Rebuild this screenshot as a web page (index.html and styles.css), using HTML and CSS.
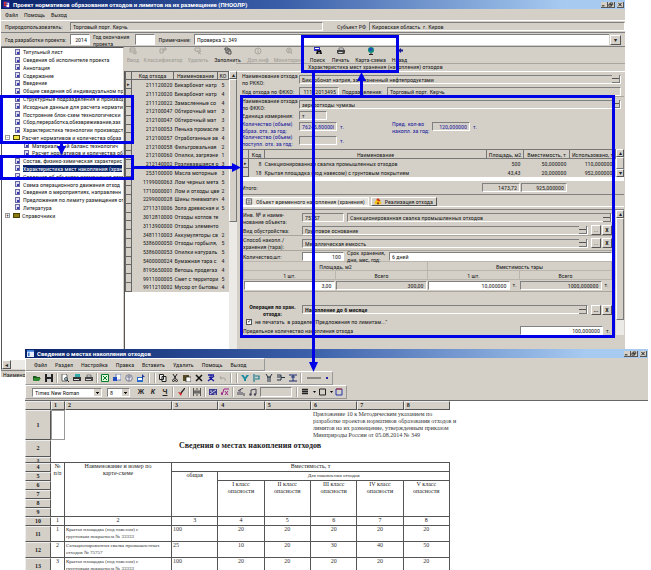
FILE: index.html
```html
<!DOCTYPE html>
<html lang="ru">
<head>
<meta charset="utf-8">
<title>Проект нормативов образования отходов</title>
<link rel="stylesheet" href="styles.css">
</head>
<body>
<main class="desktop">

<section class="window project">
  <header class="titlebar">
    <svg class="app-icon" viewBox="0 0 8 8"><rect width="8" height="8" fill="#2222a0"/><path d="M1 1h3v5H1z" fill="#d33"/><path d="M4 2h3v5H4z" fill="#fff"/><path d="M2 3h4v1H2z" fill="#16168c"/></svg>
    <h1>Проект нормативов образования отходов и лимитов на их размещение (ПНООЛР)</h1>
    <span class="win-buttons"><button aria-label="Свернуть"><svg viewBox="0 0 7 6"><path d="M1 4h3v1H1z"/></svg></button><button aria-label="Восстановить"><svg viewBox="0 0 7 6"><path d="M2.500 1h3v2.500h-3zM1 2.500h3V5H1z" fill="none" stroke="#000" stroke-width=".7"/></svg></button><button class="close" aria-label="Закрыть"><svg viewBox="0 0 7 6"><path d="M1.500 1l4 4m0-4l-4 4" stroke="#000"/></svg></button></span>
  </header>
  <nav class="menu"><a href="#">Файл</a><a href="#">Помощь</a><a href="#">Выход</a></nav>

  <div class="row user-row">
    <label for="user">Природопользователь:</label><input id="user" class="field user" value="Торговый порт. Керчь" readonly>
    <label for="subj">Субъект РФ</label><input id="subj" class="field grow" value="Кировская область  г. Киров" readonly>
  </div>
  <div class="row year-row">
    <label class="w65" for="y1">Год разработки проекта:</label><input id="y1" class="field white year num" value="2014">
    <label class="w39" for="y2">Год окончания<br>проекта</label><input id="y2" class="field white year">
    <label class="w35 right" for="note">Примечание:</label><input id="note" class="field white grow flat" value="Проверка 2, 349">
    <button class="btn drop" aria-label="Открыть список">▾</button>
  </div>

  <div class="workspace">
    <aside class="tree-pane">
      <ul class="tree">
        <li><i class="doc"></i>Титульный лист</li>
        <li><i class="doc"></i>Сведения об исполнителе проекта</li>
        <li><i class="doc"></i>Аннотация</li>
        <li><i class="doc"></i>Содержание</li>
        <li><i class="doc"></i>Введение</li>
        <li><i class="doc"></i>Общие сведения об индивидуальном пр</li>
        <li><i class="doc"></i>Структурные подразделения и производ</li>
        <li><i class="doc"></i>Исходные данные для расчета норматив</li>
        <li><i class="doc"></i>Построение блок-схем технологически</li>
        <li><i class="doc"></i>Сбор,переработка,обезвреживание,зах</li>
        <li><i class="doc"></i>Характеристика технологии производст</li>
        <li class="branch"><b>−</b><i class="folder open"></i>Расчет нормативов и количества образ</li>
        <li class="sub"><i class="doc"></i>Материальный баланс технологич</li>
        <li class="sub"><i class="doc"></i>Расчет нормативов и количества об</li>
        <li><i class="doc"></i>Состав, физико-химическая характерис</li>
        <li><i class="doc"></i><span class="selected">Характеристика мест накопления (хран</span></li>
        <li><i class="doc"></i>Сведения об объектах размещения отхо</li>
        <li><i class="doc"></i>Схема операционного движения отход</li>
        <li><i class="doc"></i>Сведения о мероприятиях, направленн</li>
        <li><i class="doc"></i>Предложения по лимиту размещения от</li>
        <li><i class="doc"></i>Литература</li>
        <li class="branch"><b>+</b><i class="folder"></i>Справочники</li>
      </ul>
      <div class="hscroll"><button class="btn" aria-label="Влево">◂</button></div>
    </aside>

    <div class="main-pane">
      <div class="toolbar">
        <button disabled><svg viewBox="0 0 8 8"><path d="M1 1h5v4H1zM1 3h5M4 6l3 1V4" class="ln"/></svg>Ввод</button>
        <button disabled><svg viewBox="0 0 8 8"><path d="M1 2h3v4H1zM5 1h2v2H5zM5 3l-1 2" class="ln"/></svg>Классификатор</button>
        <button disabled><svg viewBox="0 0 8 8"><path d="M1 1h5v3H1zM3 4l4 3M7 4L4 7" class="ln"/></svg>Удалить</button>
        <button><svg viewBox="0 0 8 8"><path d="M1 1h3v2H1zM4 4h3v3H4zM2 3v3h2M4 2h2v2" class="ln"/></svg>Заполнить</button>
        <button disabled><svg viewBox="0 0 8 8"><circle cx="4" cy="4" r="3" class="ln"/><path d="M4 2v1M4 3.500V6" class="ln"/></svg>Доп.инф</button>
        <button disabled><svg viewBox="0 0 8 8"><circle cx="4" cy="3.500" r="2.500" class="ln"/><circle cx="4" cy="3.500" r="1" class="ln"/><path d="M6 5l1 2" class="ln"/></svg>Мониторинг</button>
        <button><svg viewBox="0 0 8 8"><path d="M0 0h6v4H0z" fill="#2a2ac0"/><path d="M1 1h4v1H1z" fill="#fff"/><path d="M2 7l1-4h1.500v1h1V3H7l1 4H5.500V5h-1v2z" fill="#111"/></svg>Поиск</button>
        <button><svg viewBox="0 0 8 8"><path d="M2 1h4l1 2H2z" fill="#eee" stroke="#333" stroke-width=".6"/><path d="M0 3h8v3l-1 1H1L0 6z" fill="#444"/><path d="M1.500 5h4v1h-4z" fill="#ddd"/></svg>Печать</button>
        <button><svg viewBox="0 0 8 8"><circle cx="4" cy="3" r="3" fill="#128a7a"/><path d="M2 1l2 0 1 2-2 1zM5 1l1 1-1 1z" fill="#1b3bd0"/><path d="M4 6v1M2 7.500h4" stroke="#222"/></svg>Карта-схема</button>
        <button><svg viewBox="0 0 8 8"><path d="M2 3.500L5 1v1.500h2v2H5V6z" fill="#1a1a90"/></svg>Назад</button>
      </div>
      <h2 class="caption">Характеристика мест хранения (накопления) отходов</h2>

      <div class="split">
        <div class="waste-list">
          <table class="waste">
            <colgroup><col class="c-mark"><col class="c-code"><col><col class="c-ko"></colgroup>
            <thead><tr><th></th><th>Код отхода</th><th>Наименование</th><th>КО</th></tr></thead>
            <tbody>
            <tr><th>▸</th><td>211120020</td><td>Бикарбонат натр</td><td>5</td></tr>
            <tr><th></th><td>211120020</td><td>Бикарбонат натр</td><td>4</td></tr>
            <tr><th></th><td>211120022</td><td>Замасленные со</td><td>4</td></tr>
            <tr><th></th><td>212100047</td><td>Обтирочный мат</td><td>3</td></tr>
            <tr><th></th><td>212100047</td><td>Обтирочный мат</td><td>3</td></tr>
            <tr><th></th><td>212100053</td><td>Пенька промасле</td><td>3</td></tr>
            <tr><th></th><td>212100057</td><td>Отработанные ав</td><td>4</td></tr>
            <tr><th></th><td>212100058</td><td>Фильтровальная</td><td>2</td></tr>
            <tr><th></th><td>212100060</td><td>Опилки, загрязне</td><td>1</td></tr>
            <tr><th></th><td>212140002</td><td>Розливавшаяся р</td><td>3</td></tr>
            <tr><th></th><td>253100000</td><td>Масла моторные</td><td>3</td></tr>
            <tr><th></th><td>1199000063</td><td>Лом черных мета</td><td>5</td></tr>
            <tr><th></th><td>1710000001</td><td>Лом и отходы цве</td><td>2</td></tr>
            <tr><th></th><td>2299000028</td><td>Шины пневматич</td><td>4</td></tr>
            <tr><th></th><td>2711310006</td><td>Зола древесная и</td><td>5</td></tr>
            <tr><th></th><td>3012810000</td><td>Отходы котлов те</td><td></td></tr>
            <tr><th></th><td>3113900000</td><td>Отходы элементо</td><td></td></tr>
            <tr><th></th><td>3481110003</td><td>Аккумуляторы св</td><td>2</td></tr>
            <tr><th></th><td>5386000050</td><td>Отходы горбыля,</td><td>5</td></tr>
            <tr><th></th><td>5386000053</td><td>Опилки натураль</td><td>5</td></tr>
            <tr><th></th><td>5400000024</td><td>Бумажная тара с</td><td>4</td></tr>
            <tr><th></th><td>8195650000</td><td>Ветошь продегаз</td><td>4</td></tr>
            <tr><th></th><td>9911000005</td><td>Смет с территори</td><td>5</td></tr>
            <tr><th></th><td>9911210002</td><td>Мусор от бытовы</td><td>4</td></tr>
            </tbody>
          </table>
        </div>
        <div class="vscroll tall"><button class="btn" aria-label="Вверх">▴</button><span class="thumb"></span></div>

        <div class="details">
          <div class="row h14"><label class="w57" for="n1">Наименование отхода<br>по РККО:</label><input id="n1" class="field grow" value="Бикарбонат натрия, загрязненный нефтепродуктами" readonly><span class="spin"></span></div>
          <div class="row h10"><label class="w57" for="n2">Код отхода по ФККО:</label><input id="n2" class="field w40 num" value="11112013495" readonly><label class="w44 pad" for="n3">Подразделение:</label><input id="n3" class="field grow" value="Торговый порт. Керчь" readonly></div>
          <div class="row h15 lined"><label class="w57" for="n4">Наименование отхода<br>по ФККО:</label><input id="n4" class="field grow" value="зерноотходы чумизы" readonly><span class="spin"></span></div>
          <div class="row h9"><label class="w57" for="n5">Единица измерения:</label><input id="n5" class="field w28" value="т" readonly></div>
          <div class="row h13 blue"><label class="w57" for="n6">Количество (объем)<br>образ. отх. за год:</label><input id="n6" class="field w38 num" value="76245,800000" readonly><span class="unit">т.</span><label class="w40 gap" for="n7">Пред. кол-во<br>накопл. за год:</label><input id="n7" class="field w38 num" value="120,000000" readonly><span class="unit">т.</span></div>
          <div class="row h14 blue"><label class="w57" for="n8">Количество (объем)<br>поступл. отх. за год:</label><input id="n8" class="field w38 num" readonly><span class="unit">т.</span></div>

          <div class="places-wrap">
            <table class="places">
              <colgroup><col class="c-mark"><col class="c-num"><col><col class="c-area"><col class="c-cap"><col class="c-cap"></colgroup>
              <thead><tr><th></th><th>Код</th><th>Наименование</th><th>Площадь, м2</th><th>Вместимость, т</th><th>Использовано, т</th></tr></thead>
              <tbody>
              <tr><th>▸</th><td>8</td><td>Санкционированная свалка промышленных отходов</td><td>500</td><td>50,000000</td><td>110,000000</td></tr>
              <tr><th></th><td>18</td><td>Крытая площадка (под навесом) с грунтовым покрытием</td><td>43,43</td><td>20,000000</td><td>952,000000</td></tr>
              </tbody>
            </table>
            <div class="vscroll"><button class="btn" aria-label="Вверх">▴</button><span class="thumb"></span><button class="btn" aria-label="Вниз">▾</button></div>
          </div>
          <div class="row total"><span class="grow">Итого:</span><input class="field w38 num" aria-label="Итого площадь" value="1473,72" readonly><input class="field w46 num" aria-label="Итого вместимость" value="925,000000" readonly></div>

          <div class="tabs"><button class="tab active"><svg viewBox="0 0 8 8"><path d="M1 1h6v6H1z" fill="#eee" stroke="#555"/><path d="M2 3h4M2 5h4M4 2v4" stroke="#555" stroke-width=".6"/></svg>Объект временного накопления (хранения)</button><button class="tab"><svg viewBox="0 0 8 8"><path d="M0 5l3-4 5 4-1 2H1z" fill="#f4c20d"/><path d="M2 2l2-2 3 3-2 1z" fill="#d33a1c"/><path d="M3 5h2v2H3z" fill="#7a2a10"/></svg>Реализация отхода</button></div>

          <div class="object">
            <div class="object-form">
              <div class="row h15"><label class="w59" for="o1">Инв. № и наиме-<br>нование объекта:</label><input id="o1" class="field w42" value="75757" readonly><input class="field grow ml3" aria-label="Наименование объекта" value="Санкционированная свалка промышленных отходов" readonly><span class="spin"></span></div>
              <div class="row h10"><label class="w59" for="o2">Вид обустройства:</label><input id="o2" class="field grow" value="Грунтовое основание" readonly><span class="spin"></span><button class="btn more">...</button><button class="btn del">X</button></div>
              <div class="row h15 lined"><label class="w59" for="o3">Способ накопл./<br>хранения (тара):</label><input id="o3" class="field grow" value="Металлическая емкость" readonly><span class="spin"></span><button class="btn more">...</button><button class="btn del">X</button></div>
              <div class="row h11 lined"><label class="w59" for="o4">Количество,шт:</label><input id="o4" class="field white w42 num" value="100"><label class="w42 pad" for="o5">Срок хранения,<br>дни, мес, год:</label><input id="o5" class="field white grow" value="6 дней"></div>
              <table class="capacity">
                <thead>
                  <tr><th colspan="2">Площадь, м2</th><th colspan="2">Вместимость тары</th></tr>
                  <tr><th>1 шт.</th><th>Всего</th><th>1 шт.</th><th>Всего</th></tr>
                </thead>
                <tbody><tr>
                  <td><input class="field white num" aria-label="Площадь 1 шт." value="3,00"></td>
                  <td><input class="field num" aria-label="Площадь всего" value="300,00" readonly></td>
                  <td><div><input class="field white num" aria-label="Вместимость 1 шт." value="10,000000"><span class="unit">т.</span></div></td>
                  <td><div><input class="field num" aria-label="Вместимость всего" value="1000,000000" readonly><span class="unit">т.</span></div></td>
                </tr></tbody>
              </table>
              <div class="row h15 bold"><label class="w59 center" for="o6">Операция по хран.<br>отхода:</label><input id="o6" class="field grow" value="Накопление до 6 месяце" readonly><span class="spin"></span><button class="btn more">...</button><button class="btn del">X</button></div>
              <div class="row h9"><label class="check"><input type="checkbox" checked>не печатать  в разделе "Предложения по лимитам..."</label></div>
              <div class="row h9"><label class="grow" for="o7">Предельное количество накопления отхода</label><input id="o7" class="field white w83 num" value="100,000000"><span class="unit">т.</span></div>
            </div>
            <div class="vscroll"><button class="btn" aria-label="Вверх">▴</button><span class="thumb long"></span></div>
          </div>
        </div>
      </div>
    </div>
  </div>
  <footer class="status">Наименование</footer>
</section>

<section class="window report">
  <header class="titlebar">
    <svg class="app-icon" viewBox="0 0 8 8"><rect width="8" height="8" fill="#e8f0ff"/><path d="M0 0h8v2H0z" fill="#3a7bd8"/><path d="M1 3h2v4H1z" fill="#3a7bd8"/></svg>
    <h1>Сведения о местах накопления отходов</h1>
    <span class="win-buttons"><button aria-label="Свернуть"><svg viewBox="0 0 7 6"><path d="M1 4h3v1H1z"/></svg></button><button aria-label="Восстановить"><svg viewBox="0 0 7 6"><path d="M2.500 1h3v2.500h-3zM1 2.500h3V5H1z" fill="none" stroke="#000" stroke-width=".7"/></svg></button><button class="close" aria-label="Закрыть"><svg viewBox="0 0 7 6"><path d="M1.500 1l4 4m0-4l-4 4" stroke="#000"/></svg></button></span>
  </header>
  <nav class="menu band"><a href="#">Файл</a><a href="#">Раздел</a><a href="#">Настройка</a><a href="#">Правка</a><a href="#">Вставить</a><a href="#">Удалить</a><a href="#">Помощь</a><a href="#">Выход</a></nav>
  <div class="tools">
    <div class="band">
      <button aria-label="Открыть"><svg viewBox="0 0 8 8"><path d="M0 2h3l1 1h3v1H2L0 7z" fill="#1c5c1c"/><path d="M2 4h6L6 7H0z" fill="#2f8a2f"/></svg></button>
      <button aria-label="Сохранить"><svg viewBox="0 0 8 8"><path d="M0 0h8v8H0z" fill="#222"/><path d="M2 0h4v3H2zM2 5h4v3H2z" fill="#ccc"/></svg></button>
      <i class="sep"></i>
      <button aria-label="Просмотр"><svg viewBox="0 0 8 8"><path d="M1 0h4l1 1v6H1z" fill="#fff" stroke="#333" stroke-width=".7"/><circle cx="5" cy="5" r="1.500" fill="#acd" stroke="#222" stroke-width=".7"/><path d="M6 6l2 2" stroke="#222"/></svg></button>
      <button aria-label="Печать листов"><svg viewBox="0 0 8 8"><path d="M2 0h5v3H2z" fill="#3aa"/><path d="M0 3h8v4H0z" fill="#333"/><path d="M1 5h5v1H1z" fill="#ddd"/></svg></button>
      <button aria-label="Печать"><svg viewBox="0 0 8 8"><path d="M2 1h4v2H2z" fill="#eee" stroke="#333" stroke-width=".6"/><path d="M0 3h8v4H0z" fill="#444"/><path d="M1 5h5v1H1z" fill="#ddd"/></svg></button>
      <i class="sep"></i>
      <button aria-label="Таблица"><svg viewBox="0 0 8 8"><path d="M.5.5h7v7h-7z" fill="#dfd" stroke="#0a7a2a"/><path d="M2 2l4 4M6 2L2 6" stroke="#0a7a2a"/></svg></button>
      <button aria-label="Документ"><svg viewBox="0 0 8 8"><path d="M3 0h5v6H3z" fill="#fff" stroke="#35a" stroke-width=".7"/><path d="M0 3h4v4H0z" fill="#224cc0"/></svg></button>
      <button aria-label="Обзор"><svg viewBox="0 0 8 8"><circle cx="4" cy="4" r="3.300" fill="#e4e4e4" stroke="#668" stroke-width=".8"/><path d="M4 1v6M2 3h4" stroke="#668" stroke-width=".8"/></svg></button>
      <button aria-label="Отправить"><svg viewBox="0 0 8 8"><path d="M0 3h6v5H0z" fill="#2a6fd0"/><path d="M1 4h4v2H1z" fill="#fff"/><path d="M5 0l3 3H6v2H5z" fill="#18389a"/></svg></button>
      <i class="sep wide-gap"></i><i class="sep"></i>
      <button aria-label="Копировать"><svg viewBox="0 0 8 8"><path d="M.5.5h4v5h-4zM3 2.500h4v5H3z" fill="#eee" stroke="#222"/></svg></button>
      <button aria-label="Вырезать"><svg viewBox="0 0 8 8"><path d="M2 0l3 5M6 0L3 5" stroke="#222"/><circle cx="2.500" cy="6.500" r="1" fill="none" stroke="#222"/><circle cx="5.500" cy="6.500" r="1" fill="none" stroke="#222"/></svg></button>
      <button aria-label="Вставить"><svg viewBox="0 0 8 8"><path d="M0 1h6v6H0z" fill="#554a20"/><path d="M3 3h5v5H3z" fill="#fff" stroke="#222" stroke-width=".7"/></svg></button>
      <button aria-label="Удалить"><svg viewBox="0 0 8 8"><path d="M1 1l6 6M7 1L1 7" stroke="#111" stroke-width="1.500"/></svg></button>
      <button aria-label="Очистить формат"><svg viewBox="0 0 8 8"><path d="M1 1h6M4 1v3M1 7l6-5M2 3l5 4" stroke="#1a1aa0" stroke-width="1.300"/></svg></button>
      <button aria-label="Отменить" disabled><svg viewBox="0 0 8 8"><path d="M2 2L1 4l2 1M1 4h4q2 0 1 3" class="ln"/></svg></button>
      <i class="sep wide-gap"></i><i class="sep"></i>
      <button aria-label="Фильтр"><svg viewBox="0 0 8 8"><path d="M0 1h2.500L4 3.500 5.500 1H8L5 5v2H3V5z" fill="#1a8aa0"/></svg></button>
      <button aria-label="Вставить столбец"><svg viewBox="0 0 8 8"><path d="M1 0v8M2 2h4v3H2" fill="none" stroke="#1a7a90" stroke-width="1.200"/></svg></button>
      <button aria-label="Объединить"><svg viewBox="0 0 8 8"><path d="M1 0l2 3v5M7 0L5 3v5M2 3h4" fill="none" stroke="#234"/></svg></button>
      <button aria-label="Выровнять"><svg viewBox="0 0 8 8"><path d="M0 1h4v2H0M0 6h4V4M4 3.500h4" fill="none" stroke="#234"/></svg></button>
      <button aria-label="Распределить"><svg viewBox="0 0 8 8"><path d="M0 1h8M0 7h8M4 1v6M2 3h4" stroke="#1a2a70"/></svg></button>
      <i class="sep"></i>
      <button class="wide" aria-label="Линия"><svg viewBox="0 0 24 8"><path d="M2 4h14" stroke="#222" stroke-width=".8"/><path d="M21 3h2v2h-2z" fill="#22a"/></svg></button>
    </div>
    <div class="band">
      <select class="font-name" aria-label="Шрифт"><option>Times New Roman</option></select>
      <select class="font-size" aria-label="Размер"><option>8</option></select>
      <button class="ch" aria-label="Жирный"><b>Ж</b></button>
      <button class="ch" aria-label="Курсив"><b><em>К</em></b></button>
      <button class="ch" aria-label="Подчеркнутый"><b><u>Ч</u></b></button>
      <i class="sep"></i>
      <button aria-label="Кисть"><svg viewBox="0 0 8 8"><path d="M8 0L4 5" stroke="#222" stroke-width="1.300"/><path d="M1 4l3 4 1-3z" fill="#c22"/></svg></button>
      <i class="sep"></i>
      <button aria-label="Ширина"><svg viewBox="0 0 8 8"><path d="M.5 0v8M4 0v8M7.500 0v8M1 4h6M2 2v4M6 2v4" stroke="#333" stroke-width=".8"/></svg></button>
      <i class="sep"></i>
      <button aria-label="Вставка таблицы"><svg viewBox="0 0 8 8"><path d="M0 1h8v6H0z" fill="#3a3a90"/><path d="M1 6l6-4M1 3h2M5 6h2" stroke="#fff" stroke-width=".8"/></svg></button>
      <button aria-label="Формула"><svg viewBox="0 0 8 8"><path d="M0 4l1 3 2-6h5M4 3l3 4M7 3L4 7" fill="none" stroke="#a0208a"/></svg></button>
      <i class="sep"></i>
      <button aria-label="Диаграмма"><svg viewBox="0 0 8 8"><path d="M1 7V4M3 7V2M5 7V4M6 0L1 3M7 5v3" stroke="#445"/></svg></button>
      <button aria-label="Сортировка"><svg viewBox="0 0 8 8"><path d="M2 6V2l5-1v5" fill="none" stroke="#445"/><circle cx="1.500" cy="6.500" r="1.200" fill="#445"/><circle cx="6" cy="6.500" r="1.200" fill="#445"/></svg></button>
      <input class="field formula" aria-label="Строка формулы" readonly>
      <i class="sep"></i>
      <button class="mid" aria-label="Выравнивание"><svg viewBox="0 0 16 8"><path d="M1 1.500h6M1 3.500h6M1 5.500h6" stroke="#222" stroke-width="1.400"/><path d="M12 3h3l-1.500 2z"/></svg></button>
      <button class="mid" aria-label="Границы"><svg viewBox="0 0 16 8"><path d="M1.500 1h6v6h-6z" fill="none" stroke="#222"/><path d="M12 3h3l-1.500 2z"/></svg></button>
      <button aria-label="Заливка"><svg viewBox="0 0 8 8"><path d="M1 1h6v6H1z" fill="none" stroke="#23a"/><path d="M1 1h6" stroke="#b33"/></svg></button>
    </div>
  </div>

  <div class="sheet-area">
    <table class="sheet">
      <colgroup><col class="s-row"><col class="s-a"><col class="s-b"><col class="s-c"><col class="s-c"><col class="s-c"><col class="s-c"><col class="s-c"><col class="s-c"></colgroup>
      <thead><tr><th></th><th>1</th><th>2</th><th>3</th><th>4</th><th>5</th><th>6</th><th>7</th><th>8</th></tr></thead>
      <tbody>
      <tr class="r-note"><th>1</th><td class="cursor"></td><td colspan="4"></td><td colspan="3" class="note">Приложение 10 к Методическим указанием по<br>разработке проектов нормативов образования отходов и<br>лимитов на их размещение, утвержденным приказом<br>Минприроды России от 05.08.2014  № 349</td></tr>
      <tr class="r-title"><th>2</th><td colspan="8">Сведения о местах накопления отходов</td></tr>
      <tr class="r-gap"><th>3</th><td colspan="8"></td></tr>
      <tr class="g hd"><th>4</th><td rowspan="6">№<br>п/п</td><td rowspan="6">Наименование и номер по<br>карте-схеме</td><td colspan="6">Вместимость, т</td></tr>
      <tr class="g hd"><th>5</th><td rowspan="5">общая</td><td colspan="5" class="small">Для накопления отходов</td></tr>
      <tr class="g hd"><th>6</th><td rowspan="4">I класс<br>опасности</td><td rowspan="4">II класс<br>опасности</td><td rowspan="4">III класс<br>опасности</td><td rowspan="4">IV класс<br>опасности</td><td rowspan="4">V класс<br>опасности</td></tr>
      <tr class="g hd"><th>7</th></tr>
      <tr class="g hd"><th>8</th></tr>
      <tr class="g hd"><th>9</th></tr>
      <tr class="g hd"><th>10</th><td>1</td><td>2</td><td>3</td><td>4</td><td>5</td><td>6</td><td>7</td><td>8</td></tr>
      <tr class="g bd"><th>11</th><td>1</td><td class="l">Крытая площадка (под навесом) с<br>грунтовым покрытием № 33333</td><td class="l v">100</td><td>20</td><td>20</td><td>20</td><td>20</td><td>20</td></tr>
      <tr class="g bd"><th>12</th><td>2</td><td class="l">Санкционированная свалка промышленных<br>отходов № 75757</td><td class="l v">25</td><td>10</td><td>20</td><td>30</td><td>40</td><td>50</td></tr>
      <tr class="g bd"><th>13</th><td>3</td><td class="l">Крытая площадка (под навесом) с<br>грунтовым покрытием № 33333</td><td class="l v">100</td><td>20</td><td>20</td><td>20</td><td>20</td><td>20</td></tr>
      </tbody>
    </table>
  </div>
</section>

<svg class="callouts" width="651" height="570" viewBox="0 0 651 570" aria-hidden="true">
  <g fill="none" stroke="#0000e6" stroke-width="3">
    <path d="M1.500 96.500h131v46H1.500zM1.500 156.500h131v22H1.500zM241.500 96.500h372v240h-372zM302.500 36.500h95v35h-95z"/>
    <path d="M61.500 143v4M134 167.500h100M313.500 72v292M361.500 95V80"/>
  </g>
  <path d="M57 146h9l-4.500 9zM232 163v9l9-4.500zM309 362h9l-4.500 10zM357 81h9l-4.500-9z" fill="#0000e6"/>
</svg>
</main>
</body>
</html>
```
FILE: styles.css
```css
:root {
  --face: #d4d0c8;
  --dark: #808080;
  --lite: #fff;
  --ui: "Roboto Condensed", Roboto, "Liberation Sans", sans-serif;
}
* { box-sizing: border-box; }
body { margin: 0; background: #fff; color: #222; font: 6px/7px var(--ui); }
input, button, select { font: inherit; color: inherit; margin: 0; padding: 0; border: 0; background: none; border-radius: 0; }
h1, h2, ul { margin: 0; padding: 0; font: inherit; list-style: none; }
a { color: inherit; text-decoration: none; }
svg { display: block; }
table { border-collapse: collapse; border-spacing: 0; table-layout: fixed; }
th, td { padding: 0; font-weight: normal; white-space: nowrap; }

.desktop { position: relative; min-height: 100vh; overflow: hidden; }
.window { position: absolute; background: var(--face); }
.project { left: 1px; right: 26px; top: 0; }
.report { left: 25px; right: 3px; top: 349px; bottom: 0; display: flex; flex-direction: column; overflow: hidden; }
.callouts { position: absolute; left: 0; top: 0; }

/* title bars and menus */
.titlebar { display: flex; align-items: center; gap: 3px; height: 9px; padding: 0 1px 0 2px; color: #fff; background: linear-gradient(90deg, #0a246a, #3a5ea8 45%, #a6caf0 90%); }
.titlebar h1 { flex: 1; font-weight: bold; font-size: 6px; font-family: Roboto, "Liberation Sans", sans-serif; white-space: nowrap; }
.app-icon { width: 7px; height: 7px; }
.win-buttons { display: flex; }
.win-buttons button { width: 7px; height: 6px; background: var(--face); border-right: 1px solid #555; border-bottom: 1px solid #555; }
.win-buttons .close { margin-left: 2px; }
.menu { display: flex; align-items: center; gap: 6px; height: 11px; padding-left: 4px; }

/* common controls */
.row { display: flex; align-items: center; }
.row label { white-space: pre; }
.grow { flex: 1; min-width: 0; }
.right { text-align: right; padding-right: 3px; }
.center { text-align: center; }
.field { height: 9px; padding: 0 2px; width: 100%; min-width: 0; background: var(--face); border: 1px solid; border-color: var(--dark) var(--lite) var(--lite) var(--dark); }
.field.white { background: #fff; }
.field.grow { width: auto; }
.num { text-align: right; }
.btn { display: flex; align-items: center; justify-content: center; background: var(--face); border: 1px solid; border-color: var(--lite) #555 #555 var(--lite); line-height: 6px; }
.unit { width: 9px; padding-left: 3px; flex: none; }
.spin { width: 8px; height: 8px; margin-left: -9px; margin-right: 1px; position: relative; background: linear-gradient(#555, #555) 0 3px / 7px 1px no-repeat, linear-gradient(#777, #777) 0 7px / 7px 1px no-repeat, linear-gradient(#777, #777) 7px 0 / 1px 8px no-repeat, var(--face); }
.more { width: 10px; height: 10px; margin-left: 3px; }
.del { width: 10px; height: 10px; margin-left: 1px; font-weight: bold; }
.w28 { width: 28px; } .w35 { width: 39px; } .w38 { width: 38px; } .w39 { width: 45px; padding-left: 3px; }
.w40 { width: 40px; } .w42 { width: 42px; } .w44 { width: 48px; } .w46 { width: 46px; } .w57 { width: 57px; }
.w59 { width: 59px; } .w65 { width: 65px; } .w83 { width: 83px; }
.row > .w42.pad { width: 45px; }
.pad { padding-left: 3px; }
.ml3 { margin-left: 3px; }
.gap { margin-left: 46px; }
.h9 { height: 9px; } .h10 { height: 10px; } .h11 { height: 11px; }
.h13 { height: 13px; } .h14 { height: 14px; } .h15 { height: 15px; }
.lined { border-top: 1px solid #aaa69e; }
.blue { color: #1c1c9c; }
.bold { font-weight: bold; }

/* project header */
.user-row { height: 12px; padding-left: 4px; border-top: 1px solid var(--lite); gap: 3px; }
.user-row label:first-child { width: 62px; }
.user-row .user { width: 253px; margin-right: 11px; }
.year-row { height: 15px; padding: 0 4px; border-top: 1px solid var(--dark); border-bottom: 1px solid var(--dark); }
.year-row .field { height: 11px; }
.year-row .year { width: 20px; }
.flat { border-right: 0; }
.drop { width: 11px; height: 10px; margin-left: 1px; }

/* tree */
.workspace { display: flex; height: 323px; }
.tree-pane { width: 123px; display: flex; flex-direction: column; justify-content: space-between; background: #fff; border: 1px solid; border-color: #555 var(--face) var(--face) #555; overflow: hidden; }
.tree { height: 171px; display: grid; grid-auto-rows: 1fr; }
.tree li { display: flex; align-items: center; gap: 3px; padding-left: 13px; white-space: nowrap; min-height: 0; line-height: 7px; }
.tree .branch { padding-left: 3px; gap: 2px; }
.tree .sub { padding-left: 22px; }
.tree b { width: 5px; height: 5px; margin-right: 1px; border: 1px solid #999; font-size: 5px; line-height: 3px; text-align: center; font-weight: normal; }
.doc { flex: none; width: 5px; height: 6px; background: linear-gradient(#3a3ab0, #3a3ab0) 1px 2px / 2px 2px no-repeat, #dde; border: 1px solid #6a6aa0; }
.folder { flex: none; width: 7px; height: 5px; background: #8a7a10; border: 1px solid #4a4200; }
.folder.open { background: #f0e040; }
.selected { flex: none; background: #0a246a; color: #fff; }
.hscroll { height: 9px; background: #eceae6; }
.hscroll .btn { width: 9px; height: 9px; }
.status { height: 7px; padding-left: 2px; border-top: 1px solid var(--dark); }

/* toolbar of the project window */
.main-pane { flex: 1; min-width: 0; display: flex; flex-direction: column; }
.toolbar { display: grid; grid-template-columns: 16px 44px 26px 33px 28px 34px 23px 23px 37px 21px; padding-left: 1px; height: 16px; }
.toolbar button { display: flex; flex-direction: column; align-items: center; gap: 1px; white-space: nowrap; min-width: 0; }
.toolbar svg { width: 8px; height: 8px; }
.toolbar button:disabled { color: #a09c94; }
.ln { fill: none; stroke: #333; stroke-width: .8; }
:disabled .ln { stroke: #a09c94; }
.caption { height: 8px; margin-left: 112px; padding-left: 72px; border-top: 1px solid #aaa69e; line-height: 6px; }

/* waste list */
.split { flex: 1; display: flex; min-height: 0; }
.waste-list { width: 105px; background: #fff; border-left: 1px solid #555; }
.waste { width: 104px; height: 221px; background: var(--face); }
.waste th { border: 1px solid #666; text-align: center; }
.waste tbody th { font-size: 5px; line-height: 5px; }
.waste td { padding: 0 1px; line-height: 7px; }
.waste td:nth-child(2) { text-align: right; }
.waste td:nth-child(4) { text-align: center; }
.c-mark { width: 6px; } .c-code { width: 42px; } .c-ko { width: 11px; }
.vscroll { width: 8px; display: flex; flex-direction: column; background: #eceae6; flex: none; }
.vscroll .btn { width: 8px; height: 8px; }
.thumb { flex: 1; background: var(--face); border: 1px solid; border-color: var(--lite) #777 #777 var(--lite); }
.vscroll.tall .thumb { flex: none; height: 143px; }
.thumb.long { flex: none; height: 102px; }

/* details */
.details { flex: 1; min-width: 0; padding: 0 1px 0 5px; border-top: 1px solid var(--lite); }
.details > .row { padding-right: 3px; }
.places-wrap { display: flex; margin-top: 2px; border-bottom: 4px solid #fff; }
.places { flex: 1; width: 100%; }
.places thead th { height: 9px; border: 1px solid #777; line-height: 7px; }
.places tbody tr { height: 9px; }
.places tbody th { border: 1px solid #666; font-size: 5px; line-height: 5px; }
.places td { text-align: right; padding: 0 3px 0 2px; line-height: 7px; }
.places td:nth-child(3) { text-align: left; padding-left: 0; }
.c-num { width: 16px; } .c-area { width: 37px; } .c-cap { width: 46px; }
.details > .total { height: 14px; border-bottom: 1px solid var(--dark); padding-right: 57px; gap: 1px; }
.tabs { display: flex; gap: 2px; height: 12px; padding-top: 2px; border-bottom: 1px solid var(--lite); }
.tab { display: flex; align-items: center; gap: 3px; padding: 0 3px 0 2px; border: 1px solid; border-color: var(--lite) #555 #555 var(--lite); white-space: nowrap; }
.tab svg { width: 8px; height: 7px; }
.tab.active { background: #e8e5de; border-color: var(--lite); }
.object { display: flex; margin-top: 2px; border-top: 1px solid var(--dark); }
.object-form { flex: 1; min-width: 0; padding-right: 4px; padding-left: 1px; }
.capacity { width: 100%; margin-bottom: 10px; border-top: 1px solid var(--dark); }
.capacity th { height: 9px; border: 1px solid #bab6ae; line-height: 7px; text-align: center; }
.capacity td { padding: 1px 1px 1px 0; }
.capacity td div { display: flex; }
.capacity tbody { border-bottom: 1px solid #aaa69e; }
.check { display: flex; align-items: center; gap: 3px; padding-left: 3px; }
.check input { appearance: none; width: 6px; height: 6px; background: #fff; border: 1px solid #555; position: relative; }
.check input:checked::after { content: "✓"; position: absolute; left: 0; top: -2px; font: bold 6px/6px "DejaVu Sans", sans-serif; }

/* report window */
.band { display: flex; align-items: center; align-self: flex-start; height: 14px; border: 1px solid; border-color: var(--lite) #999 #999 var(--lite); }
.report .menu { width: 240px; height: 13px; padding-left: 8px; gap: 8px; }
.tools { display: flex; flex-direction: column; padding-bottom: 1px; border-bottom: 1px solid #666; }
.band button { width: 10px; height: 10px; margin-right: 2px; flex: none; }
.tools .band { padding-left: 6px; }
.band svg { width: 8px; height: 8px; margin: auto; }
.sep { width: 2px; height: 10px; margin: 0 2px 0 0; border-left: 1px solid #aaa69e; border-right: 1px solid #fff; }
.wide-gap { margin-right: 4px; }
.band .wide { width: 26px; }
.band .wide svg { width: 24px; }
.band .mid { width: 17px; margin-right: 0; }
.band .mid svg { width: 16px; }
.band .ch { font: 7px/10px "Liberation Sans", sans-serif; }
.band select { appearance: none; height: 9px; padding-left: 2px; border: 1px solid; border-color: var(--dark) var(--lite) var(--lite) var(--dark); background: conic-gradient(from -45deg at 50% 100%, #111 90deg, transparent 0) right 2px top 3px / 3px 2px no-repeat, linear-gradient(var(--face), var(--face)) right / 7px 100% no-repeat, #fff; }
.font-name { width: 70px; margin-right: 5px; }
.font-size { width: 23px; margin-right: 6px; }
.band .formula { width: 32px; height: 10px; margin-right: 4px; }

.sheet-area { flex: 1; background: #fff; overflow: hidden; font-family: "Liberation Serif", serif; }
.sheet { width: 425px; border-collapse: separate; }
.sheet th { background: var(--face); border: 1px solid; border-color: #eee #555 #555 #eee; font-weight: bold; line-height: 5px; }
.sheet thead th { height: 9px; text-align: left; padding-left: 2px; }
.sheet td { vertical-align: top; text-align: center; }
.s-row { width: 26px; } .s-a { width: 14px; } .s-b { width: 107px; }
.r-note { height: 30px; }
.r-note .cursor { border: 1px solid #999; }
.sheet .note { text-align: left; padding: 1px 0 0 2px; color: #333; }
.r-title { height: 17px; }
.r-title td { font-weight: bold; font-size: 8px; line-height: 12px; padding-right: 1px; }
.r-gap { height: 6px; }
.r-gap th { font-size: 5px; line-height: 3px; }
.r-gap td { border-bottom: 1px solid #555; }
.g td { border-right: 1px solid #555; border-bottom: 1px solid #555; }
.hd { height: 9px; }
.hd td { line-height: 7px; }
.sheet .small { font-size: 5px; }
.bd { height: 16px; }
.bd td { line-height: 7px; color: #333; }
.bd .l { text-align: left; padding-left: 1px; }
.bd .l:not(.v) { font-size: 5px; }
```
